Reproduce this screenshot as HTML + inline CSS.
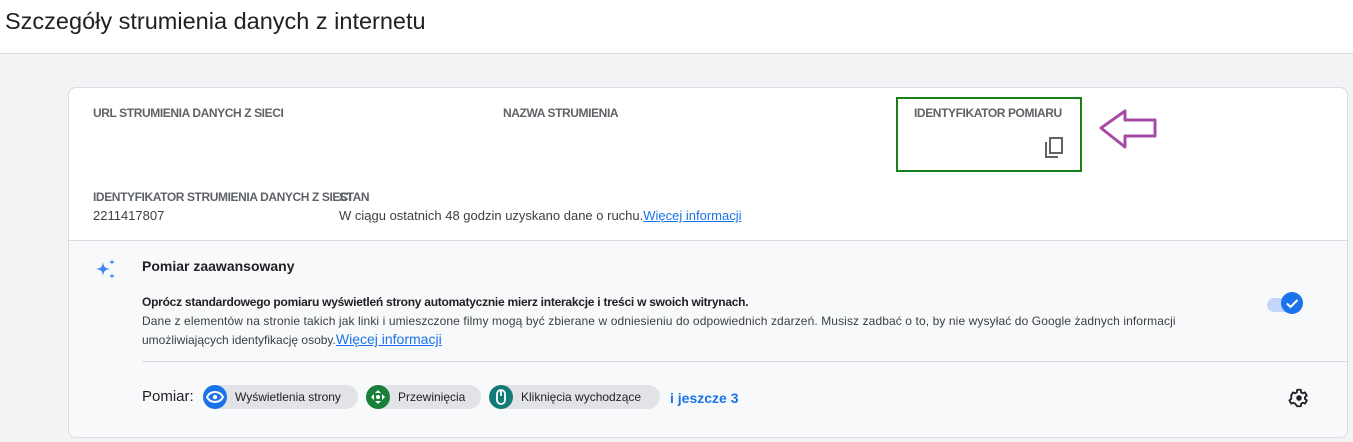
<!DOCTYPE html>
<html><head><meta charset="utf-8"><style>
*{box-sizing:border-box;margin:0;padding:0}
body{width:1353px;height:442px;overflow:hidden;background:#f1f3f4;font-family:"Liberation Sans",Arial,sans-serif;color:#202124;position:relative}
.hdr{position:absolute;left:0;top:0;width:1353px;height:54px;background:#fff;border-bottom:1px solid #dadce0}
.hdr h1{position:absolute;left:5px;top:8px;font-size:23.5px;font-weight:400;color:#202124}
.card{position:absolute;left:68px;top:87px;width:1280px;height:351px;background:#fff;border:1px solid #dadce0;border-radius:8px;overflow:hidden}
.lbl{position:absolute;font-size:12px;color:#5f6368;text-transform:uppercase;letter-spacing:-0.4px;font-weight:600}
.val{position:absolute;font-size:13px;color:#3c4043}
a{color:#1a73e8;text-decoration:underline}
.low{position:absolute;left:0;top:152px;width:1280px;height:200px;background:#f8f9fa;border-top:1px solid #dadce0}
.chip{position:absolute;top:144px;height:24px;border-radius:12px;background:#e1e3e6;font-size:12px;color:#202124;line-height:24px}
.chip .ic{position:absolute;left:0;top:0;width:24px;height:24px;border-radius:12px}
</style></head><body>
<div class="hdr"><h1>Szczegóły strumienia danych z internetu</h1></div>
<div class="card">
<div class="lbl" style="left:24px;top:18px">URL strumienia danych z sieci</div>
<div class="lbl" style="left:434px;top:18px">Nazwa strumienia</div>
<div style="position:absolute;left:827px;top:9px;width:186px;height:75px;border:2px solid #188018"></div>
<div class="lbl" style="left:845px;top:18px">Identyfikator pomiaru</div>
<svg style="position:absolute;left:974px;top:48px" width="22" height="24" viewBox="0 0 22 24"><path d="M3 6v15h12" fill="none" stroke="#5f6368" stroke-width="2"/><rect x="7" y="2" width="12" height="15" fill="none" stroke="#5f6368" stroke-width="2"/></svg>
<div class="lbl" style="left:24px;top:102px">Identyfikator strumienia danych z sieci</div>
<div class="lbl" style="left:270px;top:102px">Stan</div>
<div class="val" style="left:24px;top:120px">2211417807</div>
<div class="val" style="left:270px;top:120px">W ciągu ostatnich 48 godzin uzyskano dane o ruchu.<a>Więcej informacji</a></div>
<div class="low">
<svg style="position:absolute;left:25px;top:17px" width="24" height="24" viewBox="0 0 24 24"><path d="M9 4C9.8 9 11 10.2 16 11C11 11.8 9.8 13 9 18C8.2 13 7 11.8 2 11C7 10.2 8.2 9 9 4Z" fill="#4285f4"/><path d="M18 1C18.3 3 18.8 3.5 21 4C18.8 4.5 18.3 5 18 7C17.7 5 17.2 4.5 15 4C17.2 3.5 17.7 3 18 1Z" fill="#4285f4"/><path d="M18 15C18.3 17 18.8 17.5 21 18C18.8 18.5 18.3 19 18 21C17.7 19 17.2 18.5 15 18C17.2 17.5 17.7 17 18 15Z" fill="#4285f4"/></svg>
<div style="position:absolute;left:73px;top:17px;font-size:14px;font-weight:600;color:#202124">Pomiar zaawansowany</div>
<div style="position:absolute;left:73px;top:52px;font-size:12px;line-height:18.5px;color:#3c4043;width:1150px"><span style="font-weight:bold;color:#202124;letter-spacing:-0.25px">Oprócz standardowego pomiaru wyświetleń strony automatycznie mierz interakcje i treści w swoich witrynach.</span><br><span style="letter-spacing:0.1px">Dane z elementów na stronie takich jak linki i umieszczone filmy mogą być zbierane w odniesieniu do odpowiednich zdarzeń. Musisz zadbać o to, by nie wysyłać do Google żadnych informacji</span><br>umożliwiających identyfikację osoby.<a style="font-size:14px">Więcej informacji</a></div>
<div style="position:absolute;left:1198px;top:57px;width:30px;height:14px;border-radius:7px;background:#c2d7f8"></div>
<div style="position:absolute;left:1212px;top:51px;width:22px;height:22px;border-radius:11px;background:#1a73e8"><svg width="22" height="22" viewBox="0 0 22 22"><path d="M6 11.5l3.5 3.5 7-7" fill="none" stroke="#fff" stroke-width="2"/></svg></div>
<div style="position:absolute;left:73px;top:120px;width:1207px;border-top:1px solid #dadce0"></div>
<div style="position:absolute;left:73px;top:147px;font-size:15px;color:#202124">Pomiar:</div>
<div class="chip" style="left:134px;width:155px"><div class="ic" style="background:#1a73e8"><svg width="24" height="24" viewBox="0 0 24 24"><path d="M4 12C6 8 9 7 12 7s6 1 8 5c-2 4-5 5-8 5s-6-1-8-5z" fill="none" stroke="#fff" stroke-width="2"/><circle cx="12" cy="12" r="2.2" fill="#fff"/></svg></div><span style="position:absolute;left:32px">Wyświetlenia strony</span></div>
<div class="chip" style="left:297px;width:115px"><div class="ic" style="background:#188038"><svg width="24" height="24" viewBox="0 0 24 24"><path d="M12 5l3 3h-6zM12 19l3-3h-6zM5 12l3-3v6zM19 12l-3-3v6z" fill="#fff"/><circle cx="12" cy="12" r="2" fill="#fff"/></svg></div><span style="position:absolute;left:32px">Przewinięcia</span></div>
<div class="chip" style="left:420px;width:171px"><div class="ic" style="background:#127a78"><svg width="24" height="24" viewBox="0 0 24 24"><rect x="8" y="5" width="8" height="14" rx="4" fill="none" stroke="#fff" stroke-width="1.8"/><path d="M12 6v5" stroke="#fff" stroke-width="1.8"/></svg></div><span style="position:absolute;left:32px">Kliknięcia wychodzące</span></div>
<div style="position:absolute;left:601px;top:149px;font-size:14px;color:#1a73e8;font-weight:600">i jeszcze 3</div>
<svg style="position:absolute;left:1219px;top:146px" width="22" height="22" viewBox="0 0 24 24"><path d="M19.4 13a7.5 7.5 0 000-2l2.1-1.6-2-3.5-2.5 1a7 7 0 00-1.7-1L15 3h-4l-.4 2.9a7 7 0 00-1.7 1l-2.5-1-2 3.5L4.6 11a7.5 7.5 0 000 2l-2.1 1.6 2 3.5 2.5-1a7 7 0 001.7 1L11 21h4l.4-2.9a7 7 0 001.7-1l2.5 1 2-3.5z" fill="none" stroke="#202124" stroke-width="2" stroke-linejoin="round" transform="translate(-1 0)"/><circle cx="12" cy="12" r="3" fill="#202124"/></svg>
</div>
</div>
<svg style="position:absolute;left:1098px;top:108px" width="62" height="42" viewBox="0 0 62 42"><path d="M3 20L27 3v9h30v16H27v11z" fill="none" stroke="#a64ca6" stroke-width="3" stroke-linejoin="round"/></svg>
</body></html>
